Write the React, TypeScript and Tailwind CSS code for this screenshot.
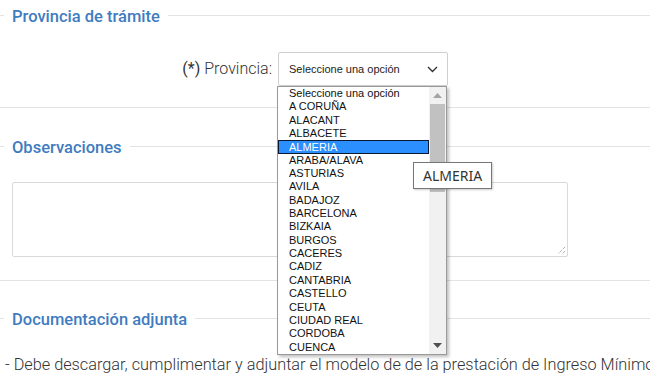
import React from "react";

const provincias = [
  "Seleccione una opción",
  "A CORUÑA",
  "ALACANT",
  "ALBACETE",
  "ALMERIA",
  "ARABA/ALAVA",
  "ASTURIAS",
  "AVILA",
  "BADAJOZ",
  "BARCELONA",
  "BIZKAIA",
  "BURGOS",
  "CACERES",
  "CADIZ",
  "CANTABRIA",
  "CASTELLO",
  "CEUTA",
  "CIUDAD REAL",
  "CORDOBA",
  "CUENCA",
];

const Legend = ({ title }: { title: string }) => (
  <div className="flex items-center h-[20px]">
    <span className="w-[4px] h-px bg-[#e3e3e3]"></span>
    <span className="relative top-[2px] px-[8px] text-[16.5px] font-medium text-[#3f7cbf] leading-[20px]">
      {title}
    </span>
    <span className="flex-1 h-px bg-[#e3e3e3]"></span>
  </div>
);

const App = () => {
  return (
    <div className="relative w-[650px] h-[379px] overflow-hidden bg-white font-['Roboto',sans-serif]">
      {/* Provincia de trámite */}
      <div className="pt-[5px]">
        <Legend title="Provincia de trámite" />
      </div>
      <div className="flex items-center mt-[27px]">
        <label className="w-[272px] text-right text-[16px] font-light text-[#333]">
          <span className="font-normal">(*)</span> Provincia:
        </label>
        <div className="ml-[6px] w-[170px] h-[34px] border border-[#cfcfcf] rounded-[2px] flex items-center justify-between pl-[10px] pr-[9px] font-['Liberation_Sans',Arial,sans-serif] text-[11px] text-[#222]">
          <span>Seleccione una opción</span>
          <svg width="11" height="7" viewBox="0 0 11 7" fill="none">
            <path d="M1 1l4.5 4.5L10 1" stroke="#333" strokeWidth="1.4" />
          </svg>
        </div>
      </div>
      <div className="mt-[21px] h-px bg-[#e3e3e3]"></div>

      {/* Observaciones */}
      <div className="mt-[28px]">
        <Legend title="Observaciones" />
      </div>
      <div className="mt-[26px] ml-[12px] w-[556px] h-[75px] border-[1.5px] border-[#d9d9d9] rounded-[2px] relative">
        <svg className="absolute right-[1px] bottom-[1px]" width="10" height="10" viewBox="0 0 10 10">
          <path d="M9 2L2 9M9 6L6 9" stroke="#8a8a8a" strokeWidth="1" strokeDasharray="1 1" />
        </svg>
      </div>
      <div className="mt-[23px] h-px bg-[#e3e3e3]"></div>

      {/* Documentación adjunta */}
      <div className="mt-[27px]">
        <Legend title="Documentación adjunta" />
      </div>
      <p className="mt-[25px] pl-[5px] text-[16.3px] leading-[24px] font-light text-[#333] whitespace-nowrap">
        - Debe descargar, cumplimentar y adjuntar el modelo de de la prestación de Ingreso Mínimo
      </p>
      <p className="pl-[5px] text-[16.3px] leading-[24px] font-light text-[#333] whitespace-nowrap">
        Vital y adjuntar el documento de otorgamiento de representación en el caso de no ser titular
      </p>

      {/* Dropdown list */}
      <div className="absolute left-[277px] top-[86px] w-[170px] h-[269px] bg-white border border-[#9a9a9a] shadow-[2px_2px_3px_rgba(0,0,0,0.25)] flex font-['Liberation_Sans',Arial,sans-serif] text-[11px] text-[#111]">
        <ul className="flex-1">
          {provincias.map((p) =>
            p === "ALMERIA" ? (
              <li
                key={p}
                className="h-[13.35px] leading-[12px] pl-[10px] bg-[#2b8fff] text-white border border-[#0b1a33]"
              >
                {p}
              </li>
            ) : (
              <li key={p} className="h-[13.35px] leading-[13.35px] pl-[11px]">
                {p}
              </li>
            )
          )}
        </ul>
        <div className="w-[17px] bg-[#f1f1f1] flex flex-col items-center">
          <div className="h-[17px] flex items-center justify-center">
            <svg width="9" height="5" viewBox="0 0 9 5">
              <path d="M0 5L4.5 0L9 5Z" fill="#a3a3a3" />
            </svg>
          </div>
          <div className="w-[15px] h-[88px] bg-[#c1c1c1]"></div>
          <div className="flex-1"></div>
          <div className="h-[17px] flex items-center justify-center">
            <svg width="9" height="5" viewBox="0 0 9 5">
              <path d="M0 0L4.5 5L9 0Z" fill="#505050" />
            </svg>
          </div>
        </div>
      </div>

      {/* Tooltip */}
      <div className="absolute left-[413px] top-[162px] h-[27px] px-[9px] flex items-center bg-white border border-[#767676] shadow-[1px_1px_2px_rgba(0,0,0,0.2)] font-['Noto_Sans',sans-serif] text-[14px] text-[#333]">
        ALMERIA
      </div>
    </div>
  );
};

export default App;
